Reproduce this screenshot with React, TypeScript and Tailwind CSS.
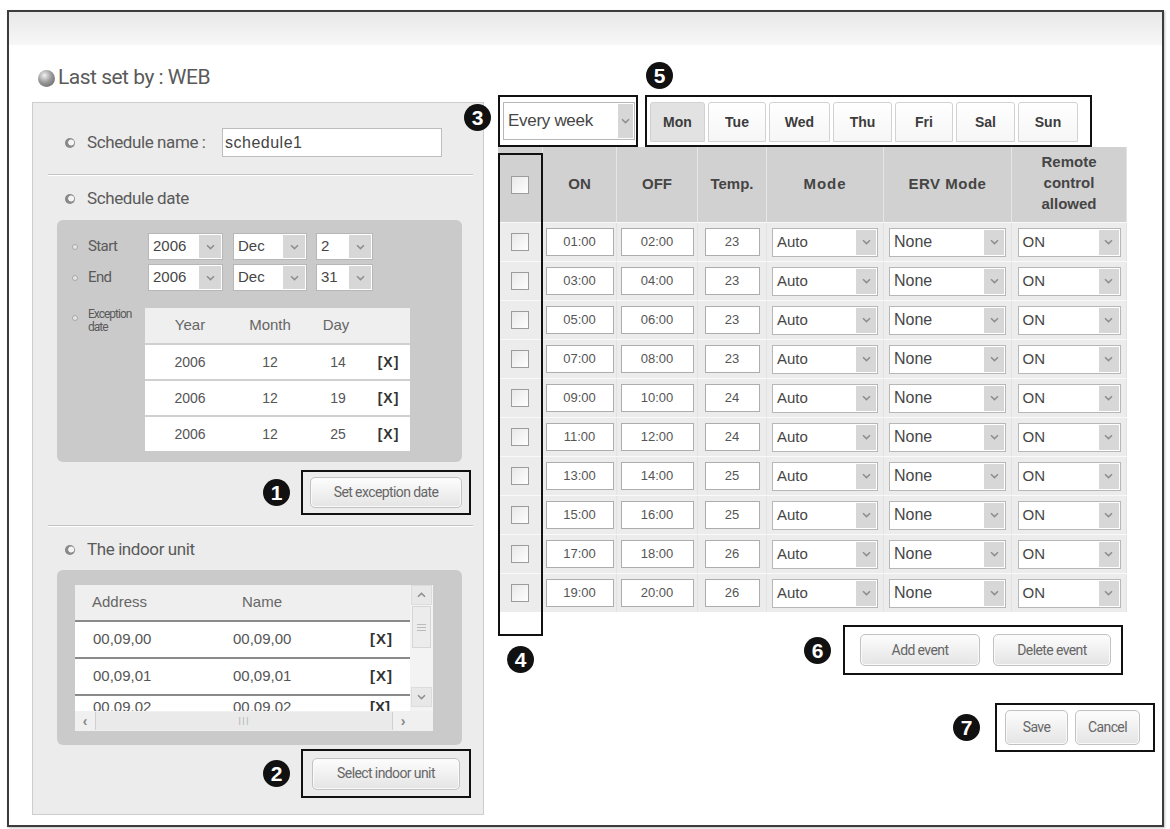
import React from 'react';

interface EventRow {
  on: string;
  off: string;
  temp: string;
}

const events: EventRow[] = [
  { on: '01:00', off: '02:00', temp: '23' },
  { on: '03:00', off: '04:00', temp: '23' },
  { on: '05:00', off: '06:00', temp: '23' },
  { on: '07:00', off: '08:00', temp: '23' },
  { on: '09:00', off: '10:00', temp: '24' },
  { on: '11:00', off: '12:00', temp: '24' },
  { on: '13:00', off: '14:00', temp: '25' },
  { on: '15:00', off: '16:00', temp: '25' },
  { on: '17:00', off: '18:00', temp: '26' },
  { on: '19:00', off: '20:00', temp: '26' },
];

const days = [
  { label: 'Mon', w: 'w-[55px]', active: true },
  { label: 'Tue', w: 'w-[58px]', active: false },
  { label: 'Wed', w: 'w-[61px]', active: false },
  { label: 'Thu', w: 'w-[59px]', active: false },
  { label: 'Fri', w: 'w-[58px]', active: false },
  { label: 'Sal', w: 'w-[59px]', active: false },
  { label: 'Sun', w: 'w-[60px]', active: false },
];

const exceptions = [
  { year: '2006', month: '12', day: '14' },
  { year: '2006', month: '12', day: '19' },
  { year: '2006', month: '12', day: '25' },
];

const units = [
  { address: '00,09,00', name: '00,09,00' },
  { address: '00,09,01', name: '00,09,01' },
];

const cols = 'grid grid-cols-[45px_74px_81px_69px_117px_128px_115px]';
const label = "font-['Roboto',sans-serif] text-[#5a5a5a]";

function Chevron({ up }: { up?: boolean }) {
  return (
    <svg width="9" height="6" viewBox="0 0 9 6" className={up ? 'rotate-180' : ''}>
      <path d="M1 1.2 4.5 4.6 8 1.2" fill="none" stroke="#8e8e8e" strokeWidth="1.5" />
    </svg>
  );
}

function Badge({ n, className = '' }: { n: string; className?: string }) {
  return (
    <span
      className={`flex h-[27px] w-[27px] shrink-0 items-center justify-center rounded-full bg-[#111] text-[21px] font-black leading-none text-white ${className}`}
    >
      {n}
    </span>
  );
}

// gray radio-like bullet in front of section labels
function Dot({ className = '' }: { className?: string }) {
  return (
    <span
      className={`h-[10px] w-[10px] shrink-0 rounded-full bg-[radial-gradient(circle_at_62%_45%,#f4f4f4_0_32%,#8f8f8f_40%,#777_100%)] ${className}`}
    />
  );
}

function SubDot({ className = '' }: { className?: string }) {
  return <span className={`h-[6px] w-[6px] shrink-0 rounded-full border border-[#a8a8a8] bg-[#e4e4e4] ${className}`} />;
}

function Select({
  value,
  className = '',
  text = 'text-[15px]',
  arrow = 'w-[20px]',
}: {
  value: string;
  className?: string;
  text?: string;
  arrow?: string;
}) {
  return (
    <div className={`flex items-stretch border border-[#b7b7b7] bg-white ${className}`}>
      <span className={`flex flex-1 items-center pl-[4px] text-[#464646] ${text}`}>{value}</span>
      <span className={`m-[1px] flex items-center justify-center bg-[#d7d7d7] ${arrow}`}>
        <Chevron />
      </span>
    </div>
  );
}

function Btn({ children, className = '' }: { children: React.ReactNode; className?: string }) {
  return (
    <div
      className={`flex items-center justify-center rounded-[5px] border border-[#c2c2c2] bg-gradient-to-b from-[#fdfdfd] to-[#e4e4e4] text-[14px] tracking-[-0.6px] text-[#666] shadow-[inset_0_0_0_1px_#fafafa] ${label} ${className}`}
    >
      {children}
    </div>
  );
}

function Check() {
  return <span className="h-[18px] w-[18px] border border-[#9c9c9c] bg-gradient-to-br from-[#e8e8e8] to-white" />;
}

function Cell({ children, className = '' }: { children?: React.ReactNode; className?: string }) {
  return <div className={`flex items-center justify-center border-r border-[#e2e2e2] ${className}`}>{children}</div>;
}

function Box({ children, className = '' }: { children: React.ReactNode; className?: string }) {
  return (
    <div className={`flex h-[28px] items-center justify-center border border-[#adadad] bg-white text-[13px] text-[#555] ${className}`}>
      {children}
    </div>
  );
}

function LeftPanel() {
  return (
    <div className="mt-[7px] h-[713px] w-[452px] shrink-0 border border-[#cdcdcd] bg-[#ececec]">
      {/* Schedule name */}
      <div className="mt-[25px] flex h-[29px] items-center">
        <Dot className="ml-[32px]" />
        <span className={`ml-[12px] w-[135px] whitespace-nowrap text-[17px] tracking-[-0.4px] ${label}`}>Schedule name :</span>
        <div className="flex h-[29px] w-[220px] items-center border border-[#bdbdbd] bg-white pl-[2px] text-[16px] tracking-[0.5px] text-[#444]">
          schedule1
        </div>
      </div>
      <div className="ml-[15px] mt-[17px] h-[2px] w-[425px] border-t border-b border-t-[#c4c4c4] border-b-white" />

      {/* Schedule date */}
      <div className="mt-[13px] flex h-[20px] items-center">
        <Dot className="ml-[32px]" />
        <span className={`ml-[12px] text-[17px] tracking-[-0.4px] ${label}`}>Schedule date</span>
      </div>
      <div className="ml-[24px] mt-[11px] h-[242px] w-[405px] rounded-[6px] bg-[#cacaca] pt-[13px]">
        {[
          { name: 'Start', day: '2' },
          { name: 'End', day: '31' },
        ].map((r, i) => (
          <div key={r.name} className={`flex h-[27px] items-center ${i ? 'mt-[4px]' : ''}`}>
            <SubDot className="ml-[15px]" />
            <span className={`ml-[10px] w-[60px] text-[15px] tracking-[-0.6px] ${label}`}>{r.name}</span>
            <Select value="2006" className="h-[27px] w-[75px]" arrow="w-[22px]" />
            <Select value="Dec" className="ml-[10px] h-[27px] w-[74px]" arrow="w-[22px]" />
            <Select value={r.day} className="ml-[9px] h-[27px] w-[57px]" arrow="w-[22px]" />
          </div>
        ))}
        <div className="mt-[17px] flex items-start">
          <SubDot className="ml-[15px] mt-[7px]" />
          <span className={`ml-[10px] w-[57px] text-[12px] leading-[13px] tracking-[-1px] ${label}`}>
            Exception
            <br />
            date
          </span>
          <div className="w-[265px] text-[14px] text-[#555]">
            <div className="grid h-[35px] grid-cols-[90px_70px_62px_43px] items-center bg-[#efefef] text-[15px] text-[#666]">
              <span className="text-center">Year</span>
              <span className="text-center">Month</span>
              <span className="text-center">Day</span>
              <span />
            </div>
            {exceptions.map((e) => (
              <div
                key={e.day}
                className="grid h-[36px] grid-cols-[90px_70px_62px_43px] items-center border-t-2 border-[#d0d0d0] bg-white"
              >
                <span className="text-center">{e.year}</span>
                <span className="text-center">{e.month}</span>
                <span className="pl-[4px] text-center">{e.day}</span>
                <span className="text-center font-bold tracking-[1px] text-[#333]">[X]</span>
              </div>
            ))}
          </div>
        </div>
      </div>

      {/* 1 */}
      <div className="mt-[8px] flex h-[45px] items-center justify-end pr-[12px]">
        <Badge n="1" className="mr-[11px]" />
        <div className="flex h-[45px] w-[170px] items-center justify-center border-2 border-[#111]">
          <Btn className="h-[31px] w-[152px]">Set exception date</Btn>
        </div>
      </div>
      <div className="ml-[15px] mt-[10px] h-[2px] w-[425px] border-t border-b border-t-[#c4c4c4] border-b-white" />

      {/* Indoor unit */}
      <div className="mt-[13px] flex h-[20px] items-center">
        <Dot className="ml-[32px]" />
        <span className={`ml-[12px] text-[17px] tracking-[-0.4px] ${label}`}>The indoor unit</span>
      </div>
      <div className="ml-[24px] mt-[10px] h-[175px] w-[405px] rounded-[6px] bg-[#cacaca] pl-[18px] pt-[15px]">
        <div className="flex h-[146px] w-[358px] flex-col overflow-hidden bg-white text-[15px] text-[#555]">
          <div className="flex h-[126px]">
            <div className="w-[335px]">
              <div className="grid h-[35px] grid-cols-[150px_135px_50px] items-center bg-[#efefef] text-[#666]">
                <span className="pl-[17px]">Address</span>
                <span className="pl-[17px]">Name</span>
                <span />
              </div>
              {units.map((u) => (
                <div key={u.address} className="grid h-[37px] grid-cols-[150px_135px_50px] items-center border-t-2 border-[#8a8a8a]">
                  <span className="pl-[18px]">{u.address}</span>
                  <span className="pl-[8px]">{u.name}</span>
                  <span className="pl-[10px] font-bold tracking-[1px] text-[#333]">[X]</span>
                </div>
              ))}
              <div className="grid h-[17px] grid-cols-[150px_135px_50px] items-end overflow-hidden border-t-2 border-[#8a8a8a] leading-[10px]">
                <span className="pl-[18px] pt-[6px]">00,09,02</span>
                <span className="pl-[8px] pt-[6px]">00,09,02</span>
                <span className="pl-[10px] pt-[6px] font-bold text-[#333]">[X]</span>
              </div>
            </div>
            {/* vertical scrollbar */}
            <div className="flex w-[23px] flex-col items-center bg-[#f3f3f3]">
              <div className="flex h-[20px] w-[21px] items-center justify-center border border-[#dcdcdc] bg-[#e8e8e8]">
                <Chevron up />
              </div>
              <div className="mt-[1px] flex h-[42px] w-[19px] flex-col items-center justify-center gap-[2px] border border-[#d6d6d6] bg-[#ececec]">
                <span className="h-[1px] w-[9px] bg-[#bbb]" />
                <span className="h-[1px] w-[9px] bg-[#bbb]" />
                <span className="h-[1px] w-[9px] bg-[#bbb]" />
              </div>
              <div className="flex-1" />
              <div className="mb-[4px] flex h-[20px] w-[21px] items-center justify-center border border-[#dcdcdc] bg-[#e8e8e8]">
                <Chevron />
              </div>
            </div>
          </div>
          {/* horizontal scrollbar */}
          <div className="flex h-[20px] items-center bg-[#f0f0f0] text-[#888]">
            <span className="w-[20px] text-center text-[14px] font-bold">‹</span>
            <div className="flex h-[18px] w-[298px] items-center justify-center border-x border-[#d0d0d0] bg-[#eaeaea] text-[10px] tracking-[1px] text-[#bbb]">
              III
            </div>
            <span className="w-[20px] text-center text-[14px] font-bold">›</span>
          </div>
        </div>
      </div>

      {/* 2 */}
      <div className="mt-[4px] flex h-[49px] items-center justify-end pr-[12px]">
        <Badge n="2" className="mr-[11px]" />
        <div className="flex h-[49px] w-[170px] items-center justify-center border-2 border-[#111]">
          <Btn className="h-[32px] w-[148px]">Select indoor unit</Btn>
        </div>
      </div>
    </div>
  );
}

function RightPanel() {
  return (
    <div className="ml-[14px] w-[657px]">
      {/* repeat + day tabs */}
      <div className="relative flex h-[52px]">
        <Badge n="3" className="absolute left-[-34px] top-[9px]" />
        <Badge n="5" className="absolute left-[148px] top-[-33px]" />
        <div className="flex h-[52px] w-[140px] items-center border-2 border-[#111] pl-[3px]">
          <Select value="Every week" className="h-[38px] w-[132px]" text="text-[17px] tracking-[-0.3px]" arrow="w-[15px]" />
        </div>
        <div className="ml-[7px] flex h-[52px] w-[447px] items-start gap-[3px] border-2 border-[#111] pl-[3px] pt-[5px]">
          {days.map((d) => (
            <div
              key={d.label}
              className={`flex h-[40px] items-center justify-center rounded-t-[3px] border border-[#d2d2d2] text-[14px] font-bold text-[#3c3c3c] ${d.w} ${
                d.active ? 'bg-[#e2e2e2]' : 'bg-gradient-to-b from-white to-[#f6f6f6]'
              }`}
            >
              {d.label}
            </div>
          ))}
        </div>
      </div>

      {/* schedule table */}
      <div className="relative w-[629px]">
        <div className={`${cols} h-[75px] bg-[#d1d1d1] text-[15px] font-bold text-[#454545]`}>
          <Cell className="border-[#e6e6e6]">
            <Check />
          </Cell>
          <Cell className="border-[#e6e6e6]">ON</Cell>
          <Cell className="border-[#e6e6e6]">OFF</Cell>
          <Cell className="border-[#e6e6e6]">Temp.</Cell>
          <Cell className="border-[#e6e6e6] tracking-[1px]">Mode</Cell>
          <Cell className="border-[#e6e6e6] tracking-[0.5px]">ERV Mode</Cell>
          <Cell className="border-0 pb-[4px] text-center leading-[21px]">
            Remote
            <br />
            control
            <br />
            allowed
          </Cell>
        </div>
        {events.map((r) => (
          <div key={r.on} className={`${cols} h-[39px] border-t border-[#f9f9f9] bg-[#ececec]`}>
            <Cell>
              <Check />
            </Cell>
            <Cell>
              <Box className="w-[68px]">{r.on}</Box>
            </Cell>
            <Cell>
              <Box className="w-[73px]">{r.off}</Box>
            </Cell>
            <Cell>
              <Box className="w-[55px]">{r.temp}</Box>
            </Cell>
            <Cell>
              <Select value="Auto" className="h-[29px] w-[106px]" />
            </Cell>
            <Cell>
              <Select value="None" className="h-[29px] w-[117px]" text="text-[16px]" />
            </Cell>
            <Cell className="border-0">
              <Select value="ON" className="h-[29px] w-[103px]" />
            </Cell>
          </div>
        ))}
        {/* 4: checkbox column */}
        <div className="absolute left-0 top-[6px] h-[483px] w-[45px] border-2 border-[#111]" />
      </div>

      {/* 6 */}
      <div className="relative mt-[13px] flex h-[50px] items-center justify-end pr-[32px]">
        <Badge n="4" className="absolute left-[9px] top-[21px]" />
        <Badge n="6" className="mr-[12px]" />
        <div className="flex h-[50px] w-[280px] items-center border-2 border-[#111] pl-[15px]">
          <Btn className="h-[32px] w-[120px]">Add event</Btn>
          <Btn className="ml-[13px] h-[32px] w-[118px]">Delete event</Btn>
        </div>
      </div>

      {/* 7 */}
      <div className="mt-[28px] flex h-[49px] items-center justify-end">
        <Badge n="7" className="mr-[15px]" />
        <div className="flex h-[49px] w-[160px] items-center border-2 border-[#111] pl-[8px]">
          <Btn className="h-[35px] w-[63px]">Save</Btn>
          <Btn className="ml-[7px] h-[35px] w-[65px]">Cancel</Btn>
        </div>
      </div>
    </div>
  );
}

export default function App() {
  return (
    <div className="min-h-screen bg-white pl-[7px] pt-[10px] font-['Liberation_Sans',Arial,sans-serif]">
      <div className="flex h-[817px] w-[1157px] flex-col border-2 border-[#3c3c3c] shadow-[1px_1px_2px_rgba(0,0,0,0.25)]">
        <div className="h-[33px] shrink-0 bg-gradient-to-b from-[#e8e8e8] to-[#f7f7f7]" />
        <div className="pl-[23px]">
          <div className="mt-[21px] flex h-[24px] items-center">
            <span className="ml-[6px] h-[17px] w-[17px] rounded-full bg-[radial-gradient(circle_at_38%_32%,#f2f2f2_0%,#9a9a9a_45%,#5a5a5a_100%)]" />
            <span className={`ml-[3px] text-[21px] tracking-[-0.5px] ${label}`}>Last set by : WEB</span>
          </div>
          <div className="mt-[5px] flex items-start">
            <LeftPanel />
            <RightPanel />
          </div>
        </div>
      </div>
    </div>
  );
}
